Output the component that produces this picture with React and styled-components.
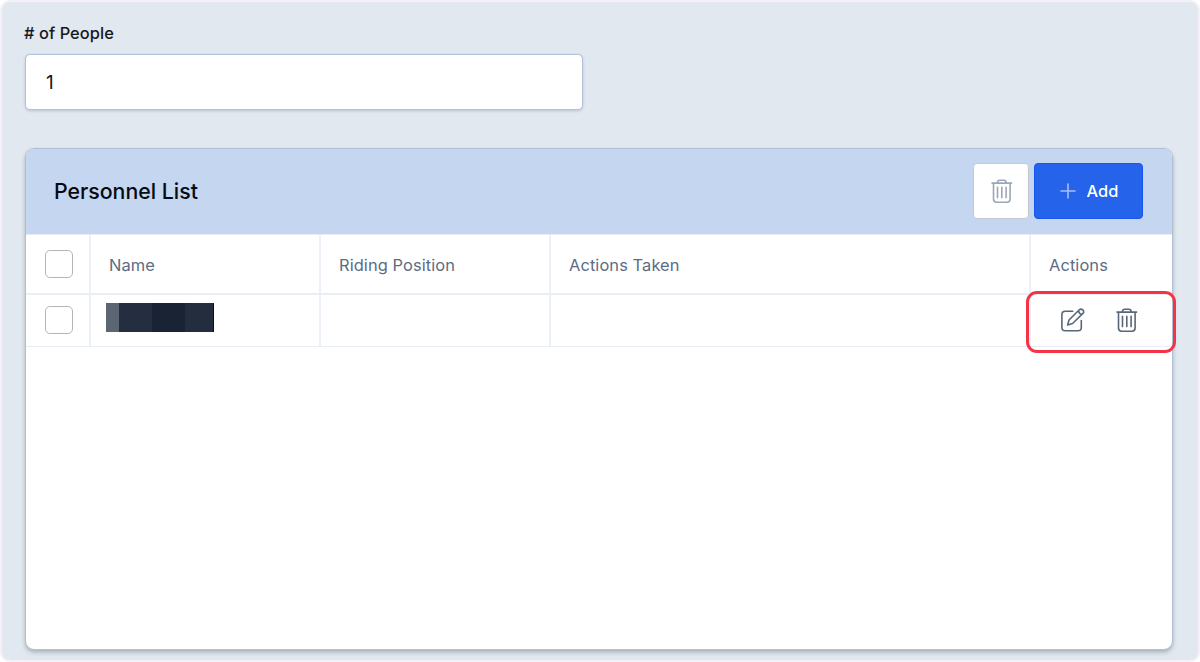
import React from "react";
import styled, { createGlobalStyle } from "styled-components";

const GlobalStyle = createGlobalStyle`
  * { box-sizing: border-box; }
  body { margin: 0; background: #fff; font-family: Inter, "Liberation Sans", sans-serif; }
`;

const Page = styled.main`
  width: 1200px;
  height: 662px;
  padding: 20px 25px 0 23px;
  border: 2px solid #f3f0f6;
  border-radius: 10px;
  background: #e1e8f0;
  overflow: hidden;
`;

const Label = styled.label`
  display: block;
  height: 22px;
  margin-left: -1px;
  line-height: 22px;
  font-size: 16.4px;
  font-weight: 500;
  letter-spacing: 0.06px;
  color: #15181d;
`;

const Input = styled.input`
  display: block;
  width: 558px;
  height: 56px;
  margin: 10px 0 38px;
  padding: 1px 20px 0;
  border: 1px solid #b3c2d9;
  border-radius: 5px;
  background: #fff;
  box-shadow: 0 1px 3px rgba(30, 50, 80, 0.2);
  font: 400 19px Inter, sans-serif;
  color: #15181d;
  outline: none;
`;

const Card = styled.section`
  width: 1148px;
  height: 502px;
  border: 1px solid #b1bfd5;
  border-radius: 9px;
  background: #fff;
  box-shadow: 0 3px 4px rgba(70, 80, 85, 0.25), 0 1px 3px rgba(70, 80, 85, 0.12);
`;

const CardHeader = styled.header`
  display: flex;
  align-items: center;
  gap: 5px;
  height: 85px;
  padding: 0 29px 1px 28px;
  border-radius: 8px 8px 0 0;
  background: #c4d6f0;
`;

const Title = styled.h2`
  flex: 1;
  margin: 0;
  font-size: 21.3px;
  font-weight: 500;
  line-height: 28px;
  color: #060a12;
`;

const Button = styled.button`
  display: flex;
  align-items: center;
  justify-content: center;
  gap: 11px;
  width: ${(p) => (p.$primary ? 109 : 56)}px;
  height: 56px;
  padding: 0 0 0 1px;
  border: 1px solid ${(p) => (p.$primary ? "#1557ec" : "#c3cad6")};
  border-radius: 4px;
  background: ${(p) => (p.$primary ? "#2563eb" : "#fff")};
  color: ${(p) => (p.$primary ? "#fff" : "#9aa7b9")};
  font: 500 16.4px Inter, sans-serif;
`;

const Row = styled.div`
  display: grid;
  grid-template-columns: 65px 230px 230px 480px 1fr;
  height: ${(p) => p.$height}px;
  border-bottom: ${(p) => p.$line}px solid #e9eef5;
  ${(p) => p.$head && "border-top: 1px solid #e8edf5;"}
`;

const Cell = styled.div`
  display: flex;
  align-items: center;
  padding: ${(p) => p.$pad || "2px 18px 0"};
  border-right: 2px solid #edf1f7;
  font-size: 16.45px;
  letter-spacing: 0.08px;
  color: #5c6c83;
  white-space: nowrap;
  &:last-child { border-right: 0; }
`;

const Checkbox = styled.span`
  width: 28px;
  height: 28px;
  border: 1px solid #b5b5b7;
  border-radius: 5px;
  background: #fff;
`;

const Redaction = styled.span`
  width: 108px;
  height: 29px;
  background: linear-gradient(
    90deg,
    #5c6572 0 13px,
    #252e40 13px 46px,
    #192334 46px 79px,
    #232d3e 79px 107px,
    #080c24 107px
  );
`;

const ActionArea = styled.div`
  position: relative;
  display: flex;
  align-items: center;
  gap: 29px;
  padding: 0 0 1px 29px;
  color: #5a6779;
`;

const Highlight = styled.div`
  position: absolute;
  left: -5px;
  top: -4px;
  width: 150px;
  height: 62px;
  border: 3px solid #f53346;
  border-radius: 11px;
`;

const Icon = styled.svg`
  display: block;
  flex: none;
  fill: none;
  stroke: currentColor;
  stroke-width: 1.6;
  stroke-linecap: round;
  stroke-linejoin: round;
`;

const TrashIcon = () => (
  <Icon width="24" height="26" viewBox="0 0 24 26">
    <path d="M2 5.1H21.6M7.6 5V4.2Q7.6 2.2 9.6 2.2H14Q16 2.2 16 4.2V5M3.5 5.2V21.1Q3.5 24.2 6.6 24.2H17Q20.1 24.2 20.1 21.1V5.2M7.5 9.3V19.6M11.8 9.3V19.6M16.1 9.3V19.6" />
  </Icon>
);

const EditIcon = () => (
  <Icon width="26" height="26" viewBox="0 0 26 26">
    <path d="M12.8 4.3H5.2Q1.9 4.3 1.9 7.6V20.4Q1.9 23.7 5.2 23.7H18Q21.3 23.7 21.3 20.4V13.6" />
    <path d="M7.6 17.9L9 13L19.3 2.8Q21 1.3 22.8 2.9Q24.6 4.7 22.9 6.4L12.6 16.5ZM18.4 3.8Q19.1 6.9 21.8 7.4" />
  </Icon>
);

const PlusIcon = () => (
  <Icon width="16" height="16" viewBox="0 0 16 16" color="#a8c1f7">
    <path d="M8 1V15M1 8H15" />
  </Icon>
);

export default function App() {
  return (
    <>
      <GlobalStyle />
      <Page>
        <Label htmlFor="people"># of People</Label>
        <Input id="people" defaultValue="1" />
        <Card>
          <CardHeader>
            <Title>Personnel List</Title>
            <Button aria-label="Delete selected"><TrashIcon /></Button>
            <Button $primary><PlusIcon />Add</Button>
          </CardHeader>
          <Row $height={61} $line={2} $head>
            <Cell $pad="0 0 0 19px"><Checkbox /></Cell>
            <Cell>Name</Cell>
            <Cell>Riding Position</Cell>
            <Cell>Actions Taken</Cell>
            <Cell>Actions</Cell>
          </Row>
          <Row $height={52} $line={1}>
            <Cell $pad="0 0 1px 19px"><Checkbox /></Cell>
            <Cell $pad="0 15px 6px"><Redaction /></Cell>
            <Cell />
            <Cell />
            <ActionArea>
              <EditIcon />
              <TrashIcon />
              <Highlight />
            </ActionArea>
          </Row>
        </Card>
      </Page>
    </>
  );
}
